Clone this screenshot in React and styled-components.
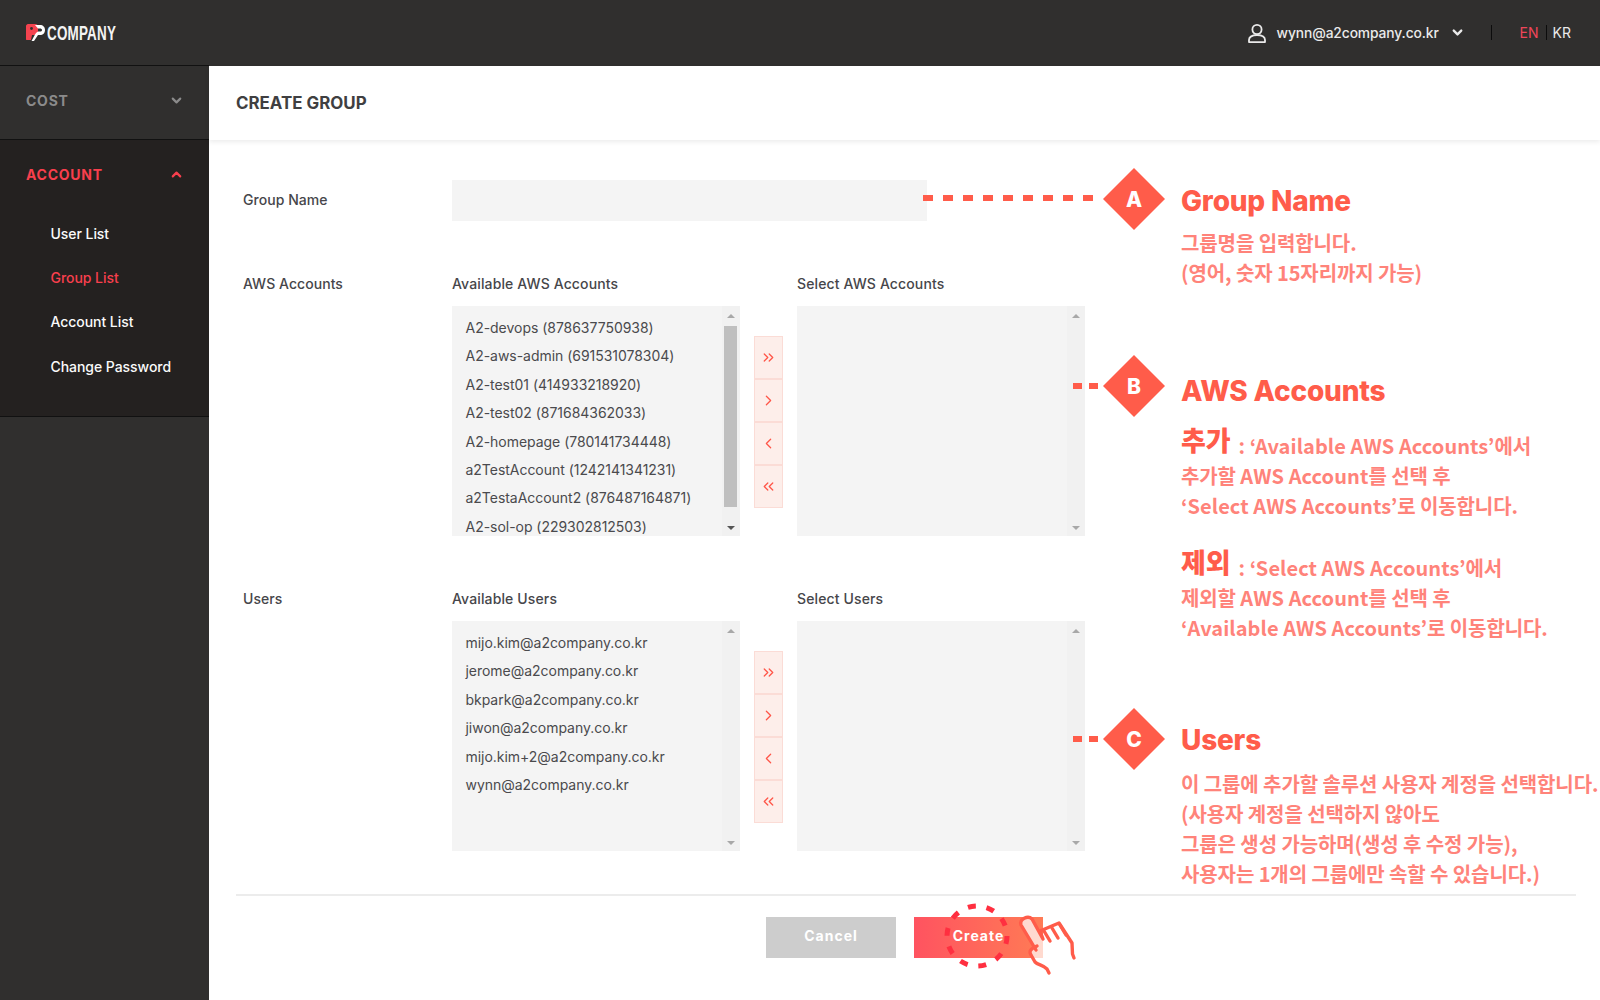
import React from 'react';
import styled, { createGlobalStyle } from 'styled-components';
import { ChevronDown, ChevronUp, ChevronRight, ChevronLeft, ChevronsRight, ChevronsLeft } from 'lucide-react';

const Global = createGlobalStyle`
  html, body { margin: 0; padding: 0; background: #fff; }
  * { box-sizing: border-box; }
  body { font-family: Inter, "Noto Sans CJK KR", sans-serif; }
`;

const Page = styled.div`
  position: relative;
  width: 1600px;
  height: 1000px;
  overflow: hidden;
  display: flex;
  flex-direction: column;
`;
const TopBar = styled.header`
  height: 66px;
  flex: none;
  background: #302f2e;
  display: flex;
  align-items: center;
  justify-content: space-between;
  padding: 0 29px 1px 26px;
`;
const Logo = styled.div`
  display: flex;
  align-items: center;
  gap: 2px;
`;
const LogoWord = styled.span`
  display: inline-block;
  width: 70px;
  font: 700 21px/21px "Liberation Sans", sans-serif;
  letter-spacing: 0.3px;
  color: #f4f4f4;
  transform: scaleX(0.64);
  transform-origin: left center;
  white-space: nowrap;
`;
const TopRight = styled.div`
  display: flex;
  align-items: center;
  color: #eaeaea;
  font-size: 13.8px;
  font-weight: 500;
`;
const Email = styled.span`
  margin-left: 10px;
  width: 173px;
  white-space: nowrap;
  letter-spacing: -0.1px;
`;
const TopDivider = styled.span`
  width: 1px;
  height: ${(p) => p.$h}px;
  background: #0c0c0c;
  margin: 0 ${(p) => p.$r}px 0 ${(p) => p.$l}px;
`;
const Lang = styled.span`
  font-size: 14px;
  font-weight: 400;
  color: ${(p) => (p.$active ? '#f0465a' : '#eaeaea')};
`;
const Body = styled.div`
  flex: 1;
  display: flex;
  min-height: 0;
`;
const Sidebar = styled.aside`
  width: 209px;
  flex: none;
  background: #302f2e;
  border-top: 1px solid #111;
  margin-top: -1px;
`;
const SideSection = styled.div`
  background: ${(p) => (p.$open ? '#242120' : '#302f2e')};
  border-bottom: 1px solid #111;
`;
const SideHead = styled.div`
  height: 73px;
  padding: 0 25px 5px 26px;
  display: flex;
  align-items: center;
  justify-content: space-between;
  font-size: 14px;
  font-weight: 700;
  letter-spacing: 0.75px;
  color: ${(p) => (p.$open ? '#f83f4d' : '#8b8b8b')};
`;
const SubMenu = styled.ul`
  list-style: none;
  margin: -2px 0 0;
  padding: 0 0 27px 50.5px;
  display: flex;
  flex-direction: column;
`;
const SubItem = styled.li`
  height: 44.4px;
  display: flex;
  align-items: center;
  font-size: 14px;
  font-weight: 500;
  letter-spacing: -0.05px;
  color: ${(p) => (p.$active ? '#f83f4d' : '#fafafa')};
`;
const Main = styled.main`
  flex: 1;
  display: flex;
  flex-direction: column;
`;
const TitleBar = styled.div`
  height: 74px;
  flex: none;
  display: flex;
  align-items: center;
  padding: 0 0 0 27px;
  font-size: 16.9px;
  font-weight: 700;
  color: #3f3f41;
  box-shadow: 0 2px 5px rgba(0, 0, 0, 0.08);
`;
const Form = styled.form`
  padding: 40px 0 0 34px;
  display: flex;
  flex-direction: column;
  gap: 52px;
`;
const Row = styled.div`
  display: grid;
  grid-template-columns: 209px 1fr;
`;
const RowLabel = styled.div`
  font-size: 14px;
  font-weight: 500;
  line-height: ${(p) => p.$lh}px;
  letter-spacing: 0.05px;
  color: #46464a;
`;
const NameLabel = styled(RowLabel)`
  padding-bottom: 2px;
  line-height: 39px;
`;
const NameInput = styled.div`
  width: 475px;
  height: 41px;
  background: #f4f4f4;
`;
const Transfer = styled.div`
  display: grid;
  grid-template-columns: 288px 57px 288px;
  grid-template-rows: 22px 230px;
  row-gap: 11px;
`;
const ListTitle = styled.div`
  font-size: 14px;
  font-weight: 500;
  line-height: 22px;
  letter-spacing: 0.13px;
  color: #46464a;
  grid-column: ${(p) => p.$col};
`;
const ListBox = styled.div`
  background: #f4f4f4;
  display: flex;
  overflow: hidden;
  grid-column: ${(p) => p.$col};
  grid-row: 2;
`;
const Options = styled.ul`
  flex: 1;
  list-style: none;
  margin: 0;
  padding: 8px 0 0 13.5px;
  overflow: hidden;
`;
const Option = styled.li`
  height: 28.4px;
  line-height: 28.4px;
  font-size: 14px;
  font-weight: 400;
  letter-spacing: -0.03px;
  color: #4a4a4d;
  white-space: nowrap;
`;
const Scrollbar = styled.div`
  width: 18px;
  flex: none;
  background: #f1f1f1;
  display: flex;
  flex-direction: column;
  align-items: center;
  padding: 8px 1px 6px 0;
`;
const Thumb = styled.div`
  width: 13px;
  flex: 1;
  margin: 8px 0 19px;
  background: ${(p) => (p.$show ? '#bfbfbf' : 'transparent')};
`;
const Arrow = styled.span`
  width: 0;
  height: 0;
  border-left: 4px solid transparent;
  border-right: 4px solid transparent;
  ${(p) => (p.$down ? 'border-top' : 'border-bottom')}: 4px solid ${(p) => (p.$dark ? '#555' : '#a8a8a8')};
`;
const MoveColumn = styled.div`
  grid-column: 2;
  grid-row: 2;
  display: flex;
  align-items: center;
  justify-content: center;
  padding-top: 2px;
`;
const MoveStack = styled.div`
  width: 29px;
  height: 172px;
  display: flex;
  flex-direction: column;
  border: 1px solid #fbdcd6;
  background: #fdeeea;
`;
const MoveButton = styled.div`
  flex: 1;
  display: flex;
  align-items: center;
  justify-content: center;
  color: #ff5548;
  & + & { border-top: 2px solid #fbdcd6; }
`;
const Footer = styled.div`
  margin: 43px 24px 0 27px;
  border-top: 2px solid #ececec;
  padding: 21px 3px 0 0;
  display: flex;
  justify-content: center;
  gap: 18px;
`;
const ActionButton = styled.div`
  width: ${(p) => p.$w}px;
  height: 41px;
  padding-bottom: 4px;
  display: flex;
  align-items: center;
  justify-content: center;
  color: #fff;
  font-size: 14px;
  font-weight: 700;
  letter-spacing: 1px;
  background: ${(p) => (p.$primary ? 'linear-gradient(90deg,#ff5360,#ff7b55)' : '#cdcdcd')};
`;
const HandLayer = styled.svg`
  position: absolute;
  left: 940px;
  top: 896px;
`;
const Marker = styled.div`
  position: absolute;
  right: ${1600 - 1165}px;
  top: ${(p) => p.$y}px;
  display: flex;
  align-items: center;
`;
const Leader = styled.span`
  width: ${(p) => p.$w}px;
  height: 6px;
  margin-right: ${(p) => p.$gap}px;
  margin-bottom: ${(p) => p.$lift}px;
  background: repeating-linear-gradient(
    90deg,
    #ff5c4a 0 ${(p) => p.$on}px,
    transparent ${(p) => p.$on}px ${(p) => p.$on + p.$off}px
  );
`;
const Diamond = styled.span`
  width: 62px;
  height: 62px;
  display: flex;
  align-items: center;
  justify-content: center;
  background: #ff5c4a;
  clip-path: polygon(50% 0, 100% 50%, 50% 100%, 0 50%);
  color: #fff;
  font-size: 21px;
  font-weight: 800;
`;
const Note = styled.div`
  position: absolute;
  left: 1181px;
  top: ${(p) => p.$y}px;
  white-space: nowrap;
`;
const NoteTitle = styled.div`
  font-size: 28px;
  font-weight: 800;
  line-height: 34px;
  letter-spacing: -0.2px;
  color: #ff5c4a;
`;
const NoteText = styled.div`
  margin-top: ${(p) => p.$mt}px;
  font-family: "Noto Sans CJK KR", sans-serif;
  font-size: 20px;
  font-weight: 700;
  line-height: 30px;
  letter-spacing: -0.1px;
  color: #ff837a;
`;
const Latin = styled.span`
  letter-spacing: 0.07px;
`;
const BigWord = styled.span`
  display: inline-block;
  font-size: 27px;
  font-weight: 900;
  line-height: 0;
  vertical-align: 3px;
  margin-right: 8px;
  color: #ff5c4a;
`;

const accounts = ['A2-devops (878637750938)','A2-aws-admin (691531078304)','A2-test01 (414933218920)','A2-test02 (871684362033)','A2-homepage (780141734448)','a2TestAccount (1242141341231)','a2TestaAccount2 (876487164871)','A2-sol-op (229302812503)'];
const users = ['mijo.kim@a2company.co.kr','jerome@a2company.co.kr','bkpark@a2company.co.kr','jiwon@a2company.co.kr','mijo.kim+2@a2company.co.kr','wynn@a2company.co.kr'];

const BarOfList = ({ thumb }) => (
  <Scrollbar>
    <Arrow />
    <Thumb $show={thumb} />
    <Arrow $down $dark={thumb} />
  </Scrollbar>
);

const TransferBlock = ({ left, right, items, thumb }) => (
  <Transfer>
    <ListTitle $col={1}>{left}</ListTitle>
    <ListTitle $col={3}>{right}</ListTitle>
    <ListBox $col={1}>
      <Options>{items.map((i) => <Option key={i}>{i}</Option>)}</Options>
      <BarOfList thumb={thumb} />
    </ListBox>
    <MoveColumn>
      <MoveStack>
        <MoveButton><ChevronsRight size={17} strokeWidth={1.8} /></MoveButton>
        <MoveButton><ChevronRight size={17} strokeWidth={1.8} /></MoveButton>
        <MoveButton><ChevronLeft size={17} strokeWidth={1.8} /></MoveButton>
        <MoveButton><ChevronsLeft size={17} strokeWidth={1.8} /></MoveButton>
      </MoveStack>
    </MoveColumn>
    <ListBox $col={3}>
      <Options />
      <BarOfList />
    </ListBox>
  </Transfer>
);

export default function App() {
  return (
    <Page>
      <Global />
      <TopBar>
        <Logo>
          <svg width="19" height="17" viewBox="0 0 19 17">
            <path d="M2 0h7c2 0 3 1 3 3v5c0 2-1 3-3 3H6l-1 5H1c-1 0-1-.5-1-1V2c0-1 1-2 2-2z" fill="#f4434f" />
            <circle cx="5.500" cy="4.500" r="1.400" fill="#302f2e" />
            <path d="M9 1h5c3 0 5 2 5 5s-2 5-5 5h-2l-4 6H5.500L9 10.500c1.500-2.500 2.500-3 5-3 1 0 2-.5 2-1.500S15 4.500 14 4.500h-2z" fill="#fff" />
          </svg>
          <LogoWord>COMPANY</LogoWord>
        </Logo>
        <TopRight>
          <svg width="20" height="20" viewBox="0 0 20 20" fill="none" stroke="#eaeaea" strokeWidth="1.8">
            <circle cx="10" cy="6.500" r="4.600" />
            <path d="M2 19.100h16v-2c0-3-3-5-8-5s-8 2-8 5z" strokeLinejoin="round" />
          </svg>
          <Email>wynn@a2company.co.kr</Email>
          <ChevronDown size={15} strokeWidth={3.8} />
          <TopDivider $h={15} $l={26} $r={28} />
          <Lang $active>EN</Lang>
          <TopDivider $h={15} $l={7} $r={6} />
          <Lang>KR</Lang>
        </TopRight>
      </TopBar>
      <Body>
        <Sidebar>
          <SideSection>
            <SideHead>COST <ChevronDown size={15} strokeWidth={3.4} /></SideHead>
          </SideSection>
          <SideSection $open>
            <SideHead $open>ACCOUNT <ChevronUp size={15} strokeWidth={3.4} /></SideHead>
            <SubMenu>
              <SubItem>User List</SubItem>
              <SubItem $active>Group List</SubItem>
              <SubItem>Account List</SubItem>
              <SubItem>Change Password</SubItem>
            </SubMenu>
          </SideSection>
        </Sidebar>
        <Main>
          <TitleBar>CREATE GROUP</TitleBar>
          <Form>
            <Row>
              <NameLabel>Group Name</NameLabel>
              <NameInput />
            </Row>
            <Row>
              <RowLabel $lh={22}>AWS Accounts</RowLabel>
              <TransferBlock left="Available AWS Accounts" right="Select AWS Accounts" items={accounts} thumb />
            </Row>
            <Row>
              <RowLabel $lh={22}>Users</RowLabel>
              <TransferBlock left="Available Users" right="Select Users" items={users} />
            </Row>
          </Form>
          <Footer>
            <ActionButton $w={130}>Cancel</ActionButton>
            <ActionButton $w={129} $primary>Create</ActionButton>
          </Footer>
        </Main>
      </Body>

      <Marker $y={168}><Leader $w={180} $on={10} $off={10} $gap={0} $lift={3} /><Diamond>A</Diamond></Marker>
      <Marker $y={355}><Leader $w={25} $on={9} $off={7} $gap={5} $lift={0} /><Diamond>B</Diamond></Marker>
      <Marker $y={708}><Leader $w={25} $on={9} $off={7} $gap={5} $lift={0} /><Diamond>C</Diamond></Marker>

      <Note $y={184}>
        <NoteTitle>Group Name</NoteTitle>
        <NoteText $mt={10}>그룹명을 입력합니다.<br />(영어, 숫자 15자리까지 가능)</NoteText>
      </Note>
      <Note $y={374}>
        <NoteTitle>AWS Accounts</NoteTitle>
        <NoteText $mt={23}><BigWord>추가</BigWord><Latin>: ‘Available AWS Accounts’</Latin>에서<br />추가할 <Latin>AWS Account</Latin>를 선택 후<br /><Latin>‘Select AWS Accounts’</Latin>로 이동합니다.</NoteText>
        <NoteText $mt={32}><BigWord>제외</BigWord><Latin>: ‘Select AWS Accounts’</Latin>에서<br />제외할 <Latin>AWS Account</Latin>를 선택 후<br /><Latin>‘Available AWS Accounts’</Latin>로 이동합니다.</NoteText>
      </Note>
      <Note $y={723}>
        <NoteTitle>Users</NoteTitle>
        <NoteText $mt={12}>이 그룹에 추가할 솔루션 사용자 계정을 선택합니다.<br />(사용자 계정을 선택하지 않아도<br />그룹은 생성 가능하며(생성 후 수정 가능),<br />사용자는 1개의 그룹에만 속할 수 있습니다.)</NoteText>
      </Note>

      <HandLayer width="140" height="84" viewBox="940 896 140 84" fill="none">
        <circle cx="977" cy="936" r="30" stroke="#ff2f40" strokeWidth="5" strokeDasharray="8 10.85" />
        <g transform="translate(1000 900)" strokeLinecap="round" strokeLinejoin="round">
          <path fill="rgba(255,255,255,.72)" d="M36 50L21 25c-2-6 7-10 11-6l10 19 17-14 13 20v11l-6 8-17 7-14-8-3-8c-2-3-1-5 2-7z" />
          <g stroke="#ff5c4a" strokeWidth="3.4">
            <path d="M36 50L21 25c-2-6 7-10 11-6l11 20-3-8 19-8 13 20 .5 11 1.500 4" />
            <path d="M49 73l-2-4c-4-4-9-4-12-7l-4-7c-2-3-1-5 2-7l4-2" />
            <path d="M44 31l6 10M52 28l6 10M60 25l6 10" />
          </g>
        </g>
      </HandLayer>
    </Page>
  );
}
